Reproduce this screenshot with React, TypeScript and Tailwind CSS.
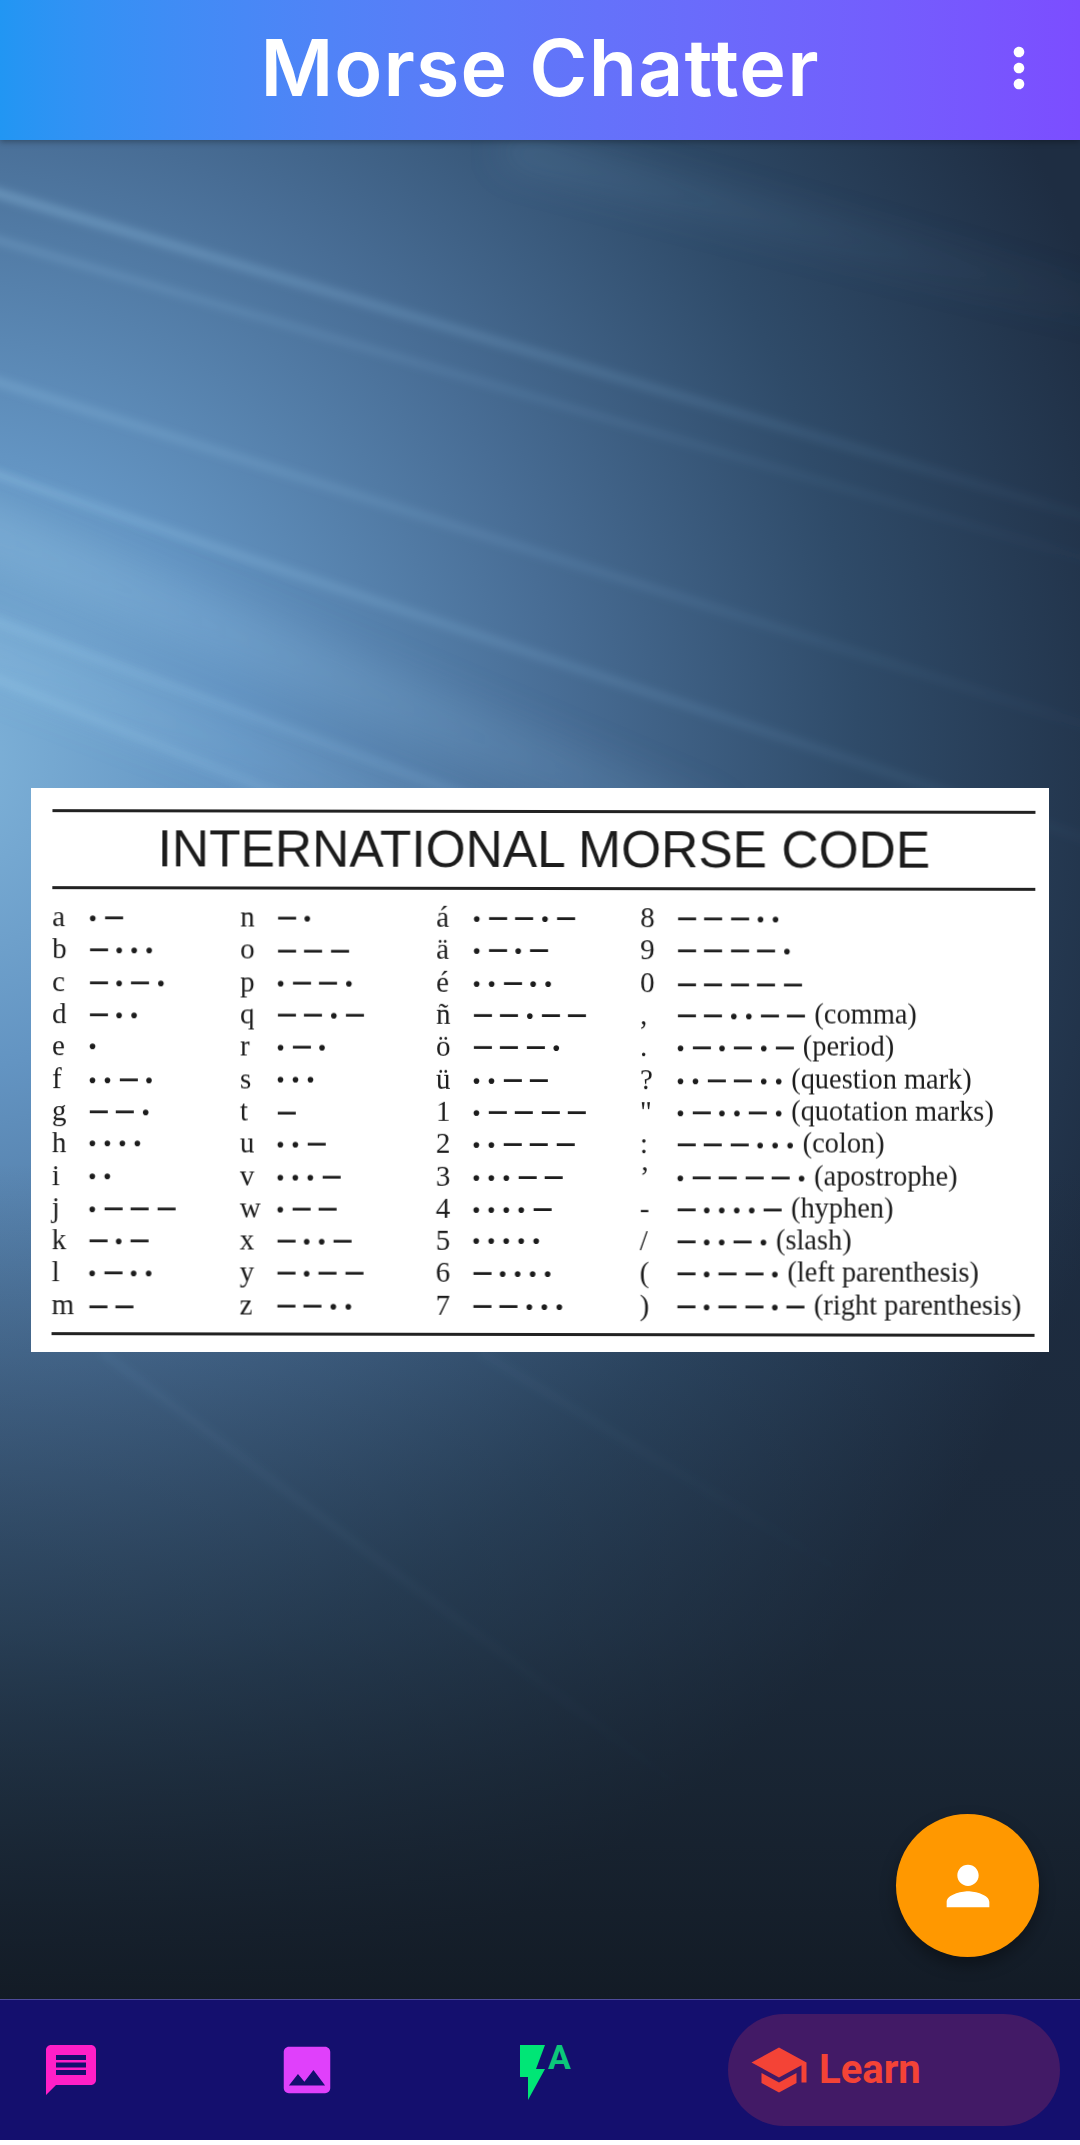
import { MdImage, MdMoreVert, MdPerson, MdSchool } from "react-icons/md";

type Row = { ch: string; code: string; label?: string };

const col1: Row[] = [
  { ch: "a", code: ".-" },
  { ch: "b", code: "-..." },
  { ch: "c", code: "-.-." },
  { ch: "d", code: "-.." },
  { ch: "e", code: "." },
  { ch: "f", code: "..-." },
  { ch: "g", code: "--." },
  { ch: "h", code: "...." },
  { ch: "i", code: ".." },
  { ch: "j", code: ".---" },
  { ch: "k", code: "-.-" },
  { ch: "l", code: ".-.." },
  { ch: "m", code: "--" },
];

const col2: Row[] = [
  { ch: "n", code: "-." },
  { ch: "o", code: "---" },
  { ch: "p", code: ".--." },
  { ch: "q", code: "--.-" },
  { ch: "r", code: ".-." },
  { ch: "s", code: "..." },
  { ch: "t", code: "-" },
  { ch: "u", code: "..-" },
  { ch: "v", code: "...-" },
  { ch: "w", code: ".--" },
  { ch: "x", code: "-..-" },
  { ch: "y", code: "-.--" },
  { ch: "z", code: "--.." },
];

const col3: Row[] = [
  { ch: "á", code: ".--.-" },
  { ch: "ä", code: ".-.-" },
  { ch: "é", code: "..-.." },
  { ch: "ñ", code: "--.--" },
  { ch: "ö", code: "---." },
  { ch: "ü", code: "..--" },
  { ch: "1", code: ".----" },
  { ch: "2", code: "..---" },
  { ch: "3", code: "...--" },
  { ch: "4", code: "....-" },
  { ch: "5", code: "....." },
  { ch: "6", code: "-...." },
  { ch: "7", code: "--..." },
];

const col4: Row[] = [
  { ch: "8", code: "---.." },
  { ch: "9", code: "----." },
  { ch: "0", code: "-----" },
  { ch: ",", code: "--..--", label: "(comma)" },
  { ch: ".", code: ".-.-.-", label: "(period)" },
  { ch: "?", code: "..--..", label: "(question mark)" },
  { ch: '"', code: ".-..-.", label: "(quotation marks)" },
  { ch: ":", code: "---...", label: "(colon)" },
  { ch: "’", code: ".----.", label: "(apostrophe)" },
  { ch: "-", code: "-....-", label: "(hyphen)" },
  { ch: "/", code: "-..-.", label: "(slash)" },
  { ch: "(", code: "-.--.", label: "(left parenthesis)" },
  { ch: ")", code: "-.--.-", label: "(right parenthesis)" },
];

const Morse = ({ code }: { code: string }) => (
  <span className="-ml-[3px] flex translate-y-[1px] items-baseline font-['Liberation_Sans',sans-serif] text-[28px] font-bold leading-[32px]">
    {[...code].map((c, i) =>
      c === "." ? (
        <span key={i} className="px-[4px] text-[20px]">•</span>
      ) : (
        <span key={i} className="px-[5.5px]">
          <span className="inline-block scale-x-[1.3]">–</span>
        </span>
      )
    )}
  </span>
);

const Column = ({ rows }: { rows: Row[] }) => (
  <div className="flex flex-col">
    {rows.map((r) => (
      <div key={r.ch} className="flex h-[32.3px] items-center whitespace-nowrap">
        <span className="w-[36px] shrink-0 text-[29px] leading-[32px]">{r.ch}</span>
        <Morse code={r.code} />
        {r.label && <span className="ml-[5px] text-[28.4px] leading-[32px]">{r.label}</span>}
      </div>
    ))}
  </div>
);

const MorseCard = () => (
  <div className="mx-[31px] h-[564px] bg-white pt-[22px] pr-[14px] pl-[21px] text-[#1c1c1c] font-['Liberation_Serif',serif]">
    <div className="rotate-[0.1deg] blur-[0.5px]">
      <div className="h-[3px] bg-[#222]" />
      <h1 className="flex h-[74px] items-center justify-center font-['Liberation_Sans',sans-serif] text-[51.5px] font-normal whitespace-nowrap">
        INTERNATIONAL MORSE CODE
      </h1>
      <div className="h-[3px] bg-[#222]" />
      <div className="mt-[11px] grid grid-cols-[188px_196px_204px_1fr]">
        <Column rows={col1} />
        <Column rows={col2} />
        <Column rows={col3} />
        <Column rows={col4} />
      </div>
      <div className="mt-[12px] h-[3px] bg-[#222]" />
    </div>
  </div>
);

const Wallpaper = () => (
  <svg className="absolute inset-0 h-full w-full" viewBox="0 140 1080 1859" preserveAspectRatio="none">
    <defs>
      <radialGradient
        id="glow"
        gradientUnits="userSpaceOnUse"
        cx="0"
        cy="0"
        r="1"
        gradientTransform="translate(-60 760) scale(1240 1300)"
      >
        <stop offset="0" stopColor="#80b4da" />
        <stop offset="0.24" stopColor="#6394c2" />
        <stop offset="0.5" stopColor="#486d95" />
        <stop offset="0.74" stopColor="#2f4b69" />
        <stop offset="1" stopColor="#1e2d42" />
      </radialGradient>
      <linearGradient id="fade" x1="0" y1="0" x2="0" y2="1">
        <stop offset="0" stopColor="#15202c" stopOpacity="0" />
        <stop offset="0.55" stopColor="#15202c" stopOpacity="0" />
        <stop offset="0.8" stopColor="#18242f" stopOpacity="0.45" />
        <stop offset="1" stopColor="#121a24" stopOpacity="0.95" />
      </linearGradient>
      <linearGradient id="ray" gradientUnits="userSpaceOnUse" x1="0" y1="0" x2="1080" y2="0">
        <stop offset="0" stopColor="#a4d4f4" stopOpacity="0.55" />
        <stop offset="0.6" stopColor="#8cc0e8" stopOpacity="0.28" />
        <stop offset="1" stopColor="#6f9fc8" stopOpacity="0.08" />
      </linearGradient>
      <linearGradient id="rayLow" gradientUnits="userSpaceOnUse" x1="100" y1="1353" x2="700" y2="1800">
        <stop offset="0" stopColor="#8cc0e8" stopOpacity="0.09" />
        <stop offset="1" stopColor="#8cc0e8" stopOpacity="0" />
      </linearGradient>
      <filter id="soft" filterUnits="userSpaceOnUse" x="-100" y="100" width="1300" height="1800">
        <feGaussianBlur stdDeviation="4" />
      </filter>
      <filter id="wide" filterUnits="userSpaceOnUse" x="-100" y="100" width="1300" height="1800">
        <feGaussianBlur stdDeviation="18" />
      </filter>
    </defs>
    <rect x="0" y="140" width="1080" height="1859" fill="url(#glow)" />
    <rect x="0" y="140" width="1080" height="1859" fill="url(#fade)" />
    <g fill="none" strokeLinecap="round">
      <g filter="url(#soft)" stroke="url(#ray)">
        <path d="M-40 182L1120 527" strokeWidth="9" opacity="0.6" />
        <path d="M-40 229L1120 569" strokeWidth="6" opacity="0.45" />
        <path d="M-40 370L1120 736" strokeWidth="8" opacity="0.45" />
        <path d="M-40 462L1120 850" strokeWidth="8" opacity="0.6" />
        <path d="M-40 608L640 860" strokeWidth="9" opacity="0.45" />
        <path d="M-40 664L440 860" strokeWidth="8" opacity="0.45" />
      </g>
      <g filter="url(#soft)" stroke="url(#rayLow)">
        <path d="M103 1353L700 1802" strokeWidth="6" />
        <path d="M482 1353L940 1632" strokeWidth="7" />
      </g>
      <g filter="url(#wide)" stroke="url(#ray)">
        <path d="M516 151L1120 311" strokeWidth="30" opacity="0.45" />
        <path d="M-40 520L700 830" strokeWidth="60" opacity="0.4" />
        <path d="M-40 640L520 860" strokeWidth="50" opacity="0.3" />
      </g>
    </g>
  </svg>
);

const ChatIcon = () => (
  <svg viewBox="0 0 24 24" className="h-[60px] w-[60px] shrink-0 fill-[#ff1fc7]">
    <path d="M20 2H4c-1.1 0-2 .9-2 2v18l4-4h14c1.1 0 2-.9 2-2V4c0-1.1-.9-2-2-2zM6 6h12v2H6V6zm0 3h12v2H6V9zm0 3h12v2H6v-2z" fillRule="evenodd" />
  </svg>
);

const FlashIcon = () => (
  <svg viewBox="0 2 60 64" className="h-[64px] w-[60px] shrink-0">
    <path d="M7 9H32L23 33H32L15 64V41H7Z" fill="#00e676" />
    <text x="35" y="33" fontSize="34" fontWeight="700" fontFamily="Roboto, sans-serif" fill="#0cc87a">A</text>
  </svg>
);

export default function App() {
  return (
    <div className="flex h-[2145px] w-[1080px] flex-col bg-white font-['Roboto',sans-serif]">
      <header className="relative z-10 flex h-[140px] shrink-0 items-center justify-center bg-gradient-to-r from-[#2196f3] to-[#7c4dff] pb-[6px] shadow-[0_2px_6px_rgba(0,0,0,0.3)]">
        <span className="font-['Inter',sans-serif] text-[79px] font-semibold tracking-[1.1px] text-white">Morse Chatter</span>
        <MdMoreVert className="absolute top-[36px] right-[29px] text-white" size={64} />
      </header>

      <main className="relative flex flex-1 items-center">
        <Wallpaper />
        <div className="relative w-full">
          <MorseCard />
        </div>
        <button className="absolute right-[41px] bottom-[42px] flex h-[143px] w-[143px] items-center justify-center rounded-full bg-[#ff9800] shadow-[0_8px_16px_rgba(0,0,0,0.35)]">
          <MdPerson className="text-white" size={64} />
        </button>
      </main>

      <nav className="mb-[5px] flex h-[141px] shrink-0 items-center gap-[175px] border-t border-[#4d4a9c] bg-[#140f6e] pl-[41px]">
        <ChatIcon />
        <MdImage className="shrink-0 text-[#e040fb]" size={62} />
        <FlashIcon />
        <div className="ml-[-20px] flex h-[112px] w-[332px] shrink-0 items-center gap-[10px] rounded-full bg-[#421a66] pl-[21px]">
          <MdSchool className="text-[#f44336]" size={60} />
          <span className="text-[40px] font-bold text-[#f44336]">Learn</span>
        </div>
      </nav>
    </div>
  );
}
